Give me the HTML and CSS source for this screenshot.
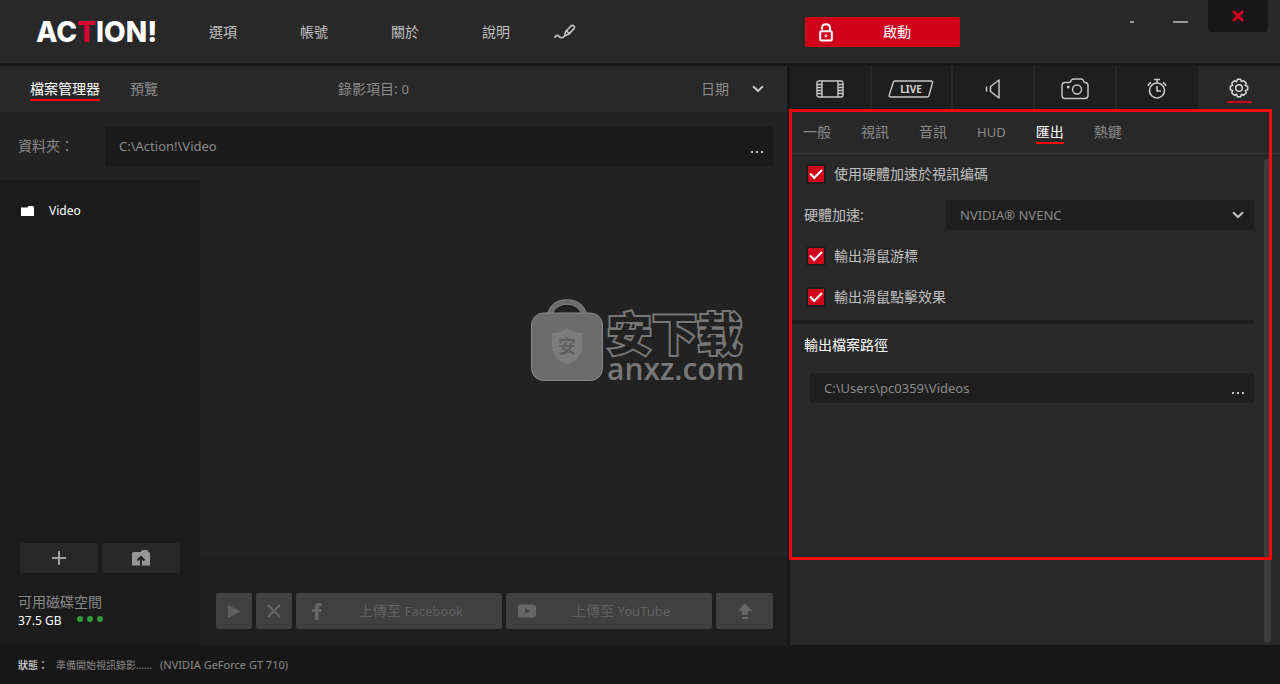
FILE: index.html
```html
<!DOCTYPE html>
<html lang="zh-Hant">
<head>
<meta charset="utf-8">
<meta name="viewport" content="width=device-width, initial-scale=1">
<title>Action!</title>
<link rel="stylesheet" href="styles.css">
</head>
<body>
<div class="app">
  <header class="topbar">
    <div class="topbar-left">
      <div class="logo">AC<span class="logo-accent">T</span>ION!</div>
      <nav class="menu">
        <button class="menu-item">選項</button>
        <button class="menu-item">帳號</button>
        <button class="menu-item">關於</button>
        <button class="menu-item">說明</button>
      </nav>
      <button class="pen" aria-label="Draw">
        <svg width="22" height="16" viewBox="0 0 22 16" fill="none" stroke="#c4c4c4" stroke-width="1.700" stroke-linecap="round" stroke-linejoin="round"><path d="M1 13.200C2 11.500 3.600 10.800 4.600 12C5.800 14 8.500 14.500 10.500 12"/><path d="M10.800 11.800L11.600 7.500L17 2Q18.500 .8 19.800 2Q21 3.400 19.800 4.800L14.600 10.300Z"/><path d="M12.500 6.800L15 9.400"/></svg>
      </button>
    </div>
    <div class="topbar-right">
      <button class="activate">
        <svg width="14" height="19" viewBox="0 0 14 19" fill="none" stroke="#fff" stroke-width="2"><path d="M3 6.500V5.200Q3 1.200 7 1.200Q11 1.200 11 5.200V8"/><rect x="1.200" y="8.200" width="11.600" height="9.400" rx="1"/><circle cx="7" cy="12.800" r="1.100" stroke-width="1"/></svg>
        <span>啟動</span>
      </button>
      <div class="window-controls">
        <button class="win" aria-label="Compact"><i class="dash dash-short"></i></button>
        <button class="win" aria-label="Minimize"><i class="dash"></i></button>
        <button class="win win-close" aria-label="Close">
          <svg width="12" height="12" viewBox="0 0 12 12" stroke="#d0021b" stroke-width="3"><path d="M1 1L11 11M11 1L1 11"/></svg>
        </button>
      </div>
    </div>
  </header>

  <main class="workspace">
    <section class="library">
      <div class="library-tabs">
        <button class="tab tab-active">檔案管理器</button>
        <button class="tab">預覽</button>
        <span class="count">錄影項目: <span class="latin">0</span></span>
        <div class="dropdown sort">
          <select aria-label="Sort"><option>日期</option></select>
          <svg class="chevron" width="12" height="8" viewBox="0 0 12 8" fill="none" stroke="#c4c4c4" stroke-width="2"><path d="M1 1.200L6 6L11 1.200"/></svg>
        </div>
      </div>
      <div class="folder-bar">
        <label for="folder">資料夾：</label>
        <div class="path path-tall">
          <input id="folder" type="text" value="C:\Action!\Video">
          <button class="browse" aria-label="Browse"><i></i><i></i><i></i></button>
        </div>
      </div>
      <div class="library-body">
        <aside class="sidebar">
          <button class="folder">
            <svg width="13" height="10" viewBox="0 0 13 10" fill="#fff"><path d="M0 1.500H6.500L7.500 0H12L13 1.500V10H0Z"/></svg>
            <span>Video</span>
          </button>
          <div class="sidebar-actions">
            <button class="side-button" aria-label="Add"><svg width="14" height="14" viewBox="0 0 14 14" stroke="#a0a0a0" stroke-width="2"><path d="M7 0V14M0 7H14"/></svg></button>
            <button class="side-button" aria-label="Up"><svg width="18" height="16" viewBox="0 0 18 16"><path fill="#969696" d="M0 3.500Q0 2 1.500 2H8.500L10.500 0H15.500L16.500 2.500H18V15.500H0Z"/><path d="M9 15.500V8M5.500 10.500L9 7L12.500 10.500" fill="none" stroke="#242424" stroke-width="2"/></svg></button>
          </div>
          <div class="disk">
            <div class="disk-label">可用磁碟空間</div>
            <div class="disk-value">37.5 GB <span class="dots"><i></i><i></i><i></i></span></div>
          </div>
        </aside>
        <div class="files">
          <div class="file-area">
            <div class="watermark">
              <svg width="72" height="82" viewBox="0 0 72 82"><path d="M18 17Q22 3 36 3Q50 3 54 17" fill="none" stroke="#888" stroke-width="5.500"/><path d="M18 17Q22 3 36 3Q50 3 54 17" fill="none" stroke="#6c6c6c" stroke-width="4"/><rect x=".5" y="14" width="71" height="67.500" rx="12" fill="#6c6c6c" stroke="#888"/><path d="M36 29Q43 34 51 34V47Q51 59 36 66Q21 59 21 47V34Q29 34 36 29Z" fill="#7c7c7c"/><text class="shield-text" x="36" y="54" text-anchor="middle">安</text></svg>
              <div class="watermark-text">
                <span class="wm-title">安下载</span>
                <span class="wm-site">anxz.com</span>
              </div>
            </div>
          </div>
          <div class="actions">
            <button class="action" aria-label="Play"><svg width="13" height="13" viewBox="0 0 13 13" fill="#606060"><path d="M0 0L13 6.500L0 13Z"/></svg></button>
            <button class="action" aria-label="Delete"><svg width="14" height="14" viewBox="0 0 14 14" stroke="#666" stroke-width="2"><path d="M1 1L13 13M13 1L1 13"/></svg></button>
            <button class="action action-wide"><svg width="10" height="17" viewBox="0 0 10 17" fill="#666"><path d="M3 17V9H0V6H3V4Q3 0 7 0H9.500V3H8Q6.500 3 6.500 4.500V6H9.500L9 9H6.500V17Z"/></svg><span>上傳至 <span class="latin">Facebook</span></span></button>
            <button class="action action-wide"><svg width="18" height="14" viewBox="0 0 18 14"><rect y=".5" width="18" height="13" rx="3" fill="#666"/><path d="M7 4.500L12 7L7 9.500Z" fill="#404040"/></svg><span>上傳至 <span class="latin">YouTube</span></span></button>
            <button class="action action-upload" aria-label="Upload"><svg width="14" height="16" viewBox="0 0 14 16" fill="#666"><path d="M7 0L14 8H10V12H4V8H0Z"/><path d="M4 14H10V16H4Z"/></svg></button>
          </div>
        </div>
      </div>
    </section>

    <section class="settings">
      <div class="modes">
        <button class="mode" aria-label="Video"><svg width="28" height="18" viewBox="0 0 28 18" fill="none" stroke="#c8c8c8" stroke-width="1.400"><rect x="1" y="1" width="26" height="16" rx="2"/><path d="M6 1V17M22 1V17M1 4.500H6M1 7.500H6M1 10.500H6M1 13.500H6M22 4.500H27M22 7.500H27M22 10.500H27M22 13.500H27"/></svg></button>
        <button class="mode" aria-label="Live"><svg width="46" height="18" viewBox="0 0 46 18"><path d="M7 1H43Q45 1 44.500 2.800L41 15.500Q40.500 17 39 17H2.500Q.7 17 1.200 15.300L5.200 2.500Q5.600 1 7 1Z" fill="none" stroke="#c8c8c8" stroke-width="1.400"/><text class="live-text" x="23" y="13" text-anchor="middle">LIVE</text></svg></button>
        <button class="mode" aria-label="Audio"><svg width="16" height="20" viewBox="0 0 16 20" fill="none" stroke="#c8c8c8" stroke-width="1.500" stroke-linejoin="round"><path d="M14 1V19L5.500 12.500V7.500Z"/><path d="M1.500 7.500V12.500"/></svg></button>
        <button class="mode" aria-label="Screenshot"><svg width="28" height="22" viewBox="0 0 28 22" fill="none" stroke="#c8c8c8" stroke-width="1.400"><path d="M4 4.500H8.500Q9.500 4.500 10 3L10.500 2Q11 1 12.500 1H20Q21.500 1 22 2L22.500 3Q23 4.500 24 4.500Q27 4.500 27 7.500V17.500Q27 20.500 24 20.500H4Q1 20.500 1 17.500V7.500Q1 4.500 4 4.500Z"/><circle cx="16" cy="11.500" r="4.500"/><path d="M6 9H8.500" stroke-width="2.500"/></svg></button>
        <button class="mode" aria-label="Timer"><svg width="20" height="22" viewBox="0 0 20 22" fill="none" stroke="#c8c8c8" stroke-width="1.600"><circle cx="10" cy="12.500" r="7.500"/><path d="M10 5V2M7 1.500H13M10 8V13H14M1 8Q2 5.500 4 4.500M19 8Q18 5.500 16 4.500"/></svg></button>
        <button class="mode mode-active" aria-label="Settings"><svg width="20" height="20" viewBox="0 0 20 20" fill="none" stroke="#d8d8d8" stroke-width="1.500" stroke-linejoin="round"><path d="M8.300 1.300H11.700L12.300 3.600L14.700 2.700L17.300 5.300L16.200 7.600L18.700 8.300V11.700L16.300 12.400L17.300 14.700L14.700 17.300L12.400 16.300L11.700 18.700H8.300L7.600 16.300L5.300 17.300L2.700 14.700L3.700 12.400L1.300 11.700V8.300L3.700 7.600L2.700 5.300L5.300 2.700L7.600 3.700Z"/><circle cx="10" cy="10" r="3.300"/></svg></button>
      </div>
      <nav class="pages">
        <button class="tab">一般</button>
        <button class="tab">視訊</button>
        <button class="tab">音訊</button>
        <button class="tab latin">HUD</button>
        <button class="tab tab-active">匯出</button>
        <button class="tab">熱鍵</button>
      </nav>
      <div class="page">
        <div class="options">
          <label class="option"><input type="checkbox" checked><span>使用硬體加速於視訊编碼</span></label>
          <div class="field">
            <label for="encoder">硬體加速:</label>
            <div class="dropdown encoder">
              <select id="encoder"><option>NVIDIA® NVENC</option></select>
              <svg class="chevron" width="12" height="8" viewBox="0 0 12 8" fill="none" stroke="#c4c4c4" stroke-width="2"><path d="M1 1.200L6 6L11 1.200"/></svg>
            </div>
          </div>
          <label class="option"><input type="checkbox" checked><span>輸出滑鼠游標</span></label>
          <label class="option"><input type="checkbox" checked><span>輸出滑鼠點擊效果</span></label>
          <hr class="divider">
          <label class="heading" for="output">輸出檔案路徑</label>
          <div class="path path-output">
            <input id="output" type="text" value="C:\Users\pc0359\Videos">
            <button class="browse" aria-label="Browse"><i></i><i></i><i></i></button>
          </div>
        </div>
        <div class="scrollbar"></div>
      </div>
      <div class="highlight"></div>
    </section>
  </main>

  <footer class="status">
    <b>狀態：</b>
    <span class="status-text">準備開始視訊錄影......</span>
    <span class="status-gpu">(NVIDIA GeForce GT 710)</span>
  </footer>
</div>
</body>
</html>
```
FILE: styles.css
```css
* { box-sizing: border-box; }

body {
  margin: 0;
  background: #171717;
  color: #c0c0c0;
  font: 14px/20px "Noto Sans", "Noto Sans CJK TC", sans-serif;
}

button, input, select {
  margin: 0;
  padding: 0;
  border: 0;
  background: none;
  color: inherit;
  font: inherit;
}

svg { display: block; flex: none; }

.latin { font-size: 13px; }

.app {
  display: grid;
  grid-template-rows: 66px 1fr 39px;
  min-height: 100vh;
}

/* Top bar */
.topbar {
  display: grid;
  grid-template-columns: 1fr 490px;
  column-gap: 3px;
  background: #282828;
  border-bottom: 3px solid #181818;
}

.topbar-left { display: flex; align-items: center; padding-left: 36px; }

.logo {
  width: 173px;
  color: #fff;
  font: 800 28px/30px Inter, sans-serif;
}

.logo-accent { color: #d80032; }
.menu { display: flex; gap: 63px; }
.pen { margin-left: 44px; }

.topbar-right {
  display: flex;
  justify-content: space-between;
  padding: 0 12px 0 15px;
}

.activate {
  display: grid;
  grid-template-columns: 14px 1fr;
  align-items: center;
  width: 155px;
  height: 30px;
  margin-top: 17px;
  padding: 0 14px;
  border-radius: 2px;
  background: #d0021b;
  color: #fff;
}

.activate span { padding-left: 15px; }

.window-controls { display: flex; }
.win { display: grid; place-items: center; width: 48px; height: 43px; }
.dash { width: 15px; height: 2px; background: #999; }
.dash-short { width: 4px; }
.win-close { width: 60px; height: 32px; margin-left: 4px; border-radius: 0 0 4px 4px; background: #171717; }

/* Workspace */
.workspace { display: grid; grid-template-columns: 1fr 490px; column-gap: 3px; }

.library { display: grid; grid-template-rows: 46px 68px 1fr; background: #222; }

.tab { height: 24px; padding-top: 2px; border-bottom: 2px solid transparent; color: #8a8a8a; white-space: nowrap; }
.tab-active { border-color: #f00; color: #fff; }

.library-tabs {
  display: flex;
  align-items: center;
  gap: 30px;
  padding: 0 20px 0 30px;
  background: #282828;
  color: #8a8a8a;
}

.count { margin-left: 150px; }

.dropdown { display: grid; align-items: center; }
.dropdown select, .dropdown .chevron { grid-area: 1 / 1; }
.dropdown select { width: 100%; height: 30px; appearance: none; outline: 0; }
.chevron { justify-self: end; pointer-events: none; }
.sort { width: 66px; margin-left: auto; padding-right: 3px; }

.folder-bar {
  display: grid;
  grid-template-columns: 87px 1fr;
  align-items: center;
  padding: 0 14px 0 18px;
  color: #8a8a8a;
}

.path {
  display: flex;
  height: 30px;
  padding: 0 6px 0 14px;
  border-radius: 2px;
  background: #1e1e1e;
  color: #8a8a8a;
  font-size: 13px;
}

.path-tall { height: 40px; background: #1a1a1a; }
.path input { flex: 1; min-width: 0; outline: 0; }
.browse { display: flex; align-items: end; gap: 3px; width: 18px; padding: 0 3px 9px 2px; }
.path-tall .browse { padding-bottom: 13px; }
.browse i { width: 2px; height: 2px; background: #c4c4c4; }

.library-body { display: grid; grid-template-columns: 200px 1fr; }

.sidebar { display: flex; flex-direction: column; padding: 21px 20px 14px; background: #1b1b1b; }
.folder { display: flex; align-items: center; gap: 15px; padding-left: 1px; color: #fff; font-size: 12px; }
.sidebar-actions { display: grid; grid-template-columns: 1fr 1fr; gap: 4px; margin-top: auto; }
.side-button { display: grid; place-items: center; height: 30px; border-radius: 2px; background: #282828; }
.disk { margin: 20px 0 0 -2px; }
.disk-label { line-height: 18px; color: #8a8a8a; }
.disk-value { display: flex; gap: 16px; color: #fff; font-size: 12px; }
.dots { display: flex; gap: 4px; padding-top: 5px; }
.dots i { width: 6px; height: 6px; border-radius: 50%; background: #33993a; }

.files { display: grid; grid-template-rows: 1fr 89px; }

.file-area { display: flex; align-items: center; justify-content: flex-end; padding: 0 42px 56px 0; }
.watermark { display: flex; align-items: flex-end; gap: 4px; color: #707070; }
.watermark-text { display: grid; gap: 3px; width: 138px; white-space: nowrap; }
.wm-title {
  color: #222;
  font: 700 45px/45px "Noto Sans CJK SC", sans-serif;
  -webkit-text-stroke: 4px #777;
  paint-order: stroke fill;
}
.wm-site { font: 600 30px/24px "Open Sans", sans-serif; color: #777; }
.shield-text { fill: #606060; font: 700 18px "Noto Sans CJK SC", sans-serif; }

.actions { display: flex; align-items: flex-end; gap: 4px; padding: 0 14px 16px 16px; background: #1e1e1e; }
.action { display: grid; place-items: center; width: 36px; height: 36px; border-radius: 2px; background: #404040; color: #606060; }
.action-wide { flex: 1; grid-template-columns: 42px 1fr; padding-right: 18px; }
.action-upload { width: 57px; }

/* Settings */
.settings {
  position: relative;
  display: grid;
  grid-template-rows: 46px 42px 1fr;
  background: #282828;
}

.modes { display: grid; grid-template-columns: repeat(6, 1fr); }
.mode { display: grid; place-items: center; border-right: 2px solid #282828; background: #1e1e1e; }
.mode:nth-last-child(2) { border: 0; }
.mode-active { align-content: end; gap: 3px; padding-bottom: 9px; border: 0; background: #282828; }
.mode-active::after { content: ""; width: 25px; height: 2px; background: #d0021b; }
.live-text { fill: #d0d0d0; font: 700 10px "Noto Sans", sans-serif; }

.pages { display: flex; align-items: center; gap: 30px; padding: 0 0 2px 13px; border-bottom: 1px solid #333; }

.page { display: flex; justify-content: space-between; padding-right: 9px; }
.options { flex: 1; margin: -1px 10px 0 0; }

.option { display: flex; align-items: center; gap: 9px; height: 41px; padding-left: 17px; }

.option input {
  display: grid;
  place-items: center;
  width: 18px;
  height: 18px;
  border: 1px solid #1b1b1b;
  border-radius: 2px;
  background: #d0021b;
  box-shadow: 0 0 0 1px #1e1e1e;
  appearance: none;
}

.option input:checked::before {
  content: "";
  width: 10px;
  height: 5px;
  margin-bottom: 3px;
  border: solid #fff;
  border-width: 0 0 2px 2px;
  rotate: -45deg;
}

.field { display: grid; grid-template-columns: 142px 1fr; align-items: center; height: 41px; padding-left: 14px; }
.encoder { padding: 0 10px 0 14px; border-radius: 2px; background: #1e1e1e; color: #8a8a8a; font-size: 13px; }
.divider { height: 4px; margin: 3px 0 0; border: 0; background: #1e1e1e; }
.heading { display: block; padding-left: 14px; color: #fff; line-height: 41px; }
.path-output { margin: 8px 0 0 20px; }
.scrollbar { width: 7px; margin: 5px 0 2px; border-radius: 4px; background: #3c3c3c; }

/* Red callout frame over the export page */
.highlight {
  position: absolute;
  top: 43px;
  left: -1px;
  right: 8px;
  height: 451px;
  border: 3px solid #f00;
  pointer-events: none;
}

/* Status bar */
.status { display: flex; align-items: center; padding-left: 18px; color: #8a8a8a; font-size: 11px; }
.status b { width: 38px; color: #c0c0c0; font-size: 10px; }
.status-text { width: 104px; font-size: 10px; white-space: nowrap; }
```
